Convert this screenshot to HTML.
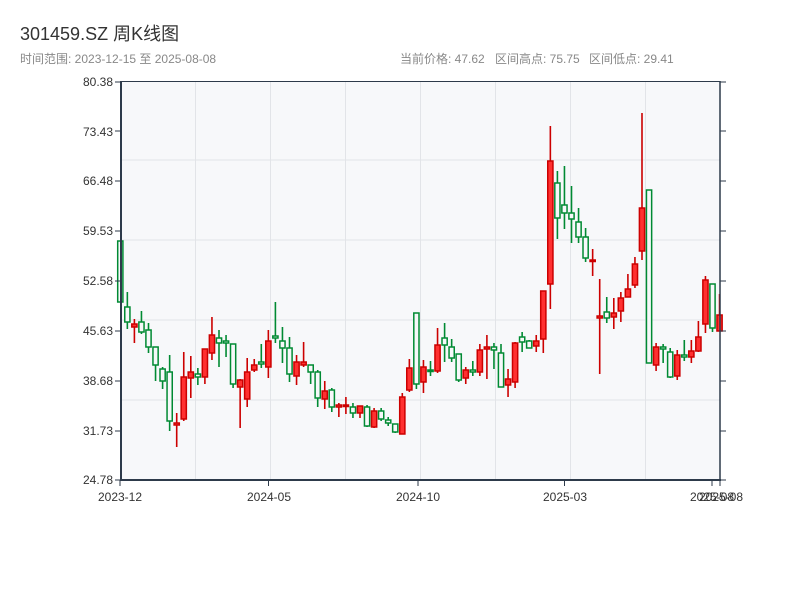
<!DOCTYPE html>
<html><head><meta charset="utf-8"><style>
body{margin:0;background:#fff;width:800px;height:600px;overflow:hidden;font-family:"Liberation Sans","Noto Sans CJK SC",sans-serif}
</style></head><body>
<svg id="s" width="800" height="600" xmlns="http://www.w3.org/2000/svg" font-family="Liberation Sans, Noto Sans CJK SC, sans-serif">
<text x="20" y="40" font-size="18" fill="#333">301459.SZ 周K线图</text>
<text x="20" y="63" font-size="12" fill="#888">时间范围: 2023-12-15 至 2025-08-08</text>
<text x="400" y="63" font-size="12" fill="#888">当前价格: 47.62</text>
<text x="495" y="63" font-size="12" fill="#888">区间高点: 75.75</text>
<text x="589" y="63" font-size="12" fill="#888">区间低点: 29.41</text>
<rect x="121" y="81" width="599" height="399" fill="#f7f8fa"/>
<g stroke="#e2e4e8" stroke-width="1">
<line x1="121" x2="720" y1="160" y2="160"/><line x1="121" x2="720" y1="240" y2="240"/>
<line x1="121" x2="720" y1="320" y2="320"/><line x1="121" x2="720" y1="400" y2="400"/>
<line x1="195.5" x2="195.5" y1="81" y2="480"/><line x1="270.5" x2="270.5" y1="81" y2="480"/>
<line x1="345.5" x2="345.5" y1="81" y2="480"/><line x1="420.5" x2="420.5" y1="81" y2="480"/>
<line x1="495.5" x2="495.5" y1="81" y2="480"/><line x1="570.5" x2="570.5" y1="81" y2="480"/>
<line x1="645.5" x2="645.5" y1="81" y2="480"/>
</g>
<g id="c"></g>
<g stroke="#2d3a4a">
<line x1="121" x2="720" y1="81.5" y2="81.5" stroke-width="1"/>
<line x1="121" x2="121" y1="81" y2="481" stroke-width="2"/>
<line x1="720" x2="720" y1="81" y2="481" stroke-width="1.5"/>
<line x1="120" x2="721" y1="480" y2="480" stroke-width="2"/>
</g>
<g id="t" stroke="#2d3a4a" stroke-width="1"></g>
<g font-size="12" fill="#333" text-anchor="end">
<text x="113" y="86">80.38</text><text x="113" y="136">73.43</text><text x="113" y="185">66.48</text>
<text x="113" y="235">59.53</text><text x="113" y="285">52.58</text><text x="113" y="335">45.63</text>
<text x="113" y="385">38.68</text><text x="113" y="435">31.73</text><text x="113" y="484">24.78</text>
</g>
<g font-size="12" fill="#333" text-anchor="middle">
<text x="120" y="501">2023-12</text><text x="269" y="501">2024-05</text><text x="418" y="501">2024-10</text>
<text x="565" y="501">2025-03</text><text x="712" y="501">2025-08</text><text x="721" y="501">2025-08</text>
</g>
</svg>
<script>
var d=[
['g',241,302,241,302],['g',307,322,292,329],['r',324,327,319,343],['g',322,332,311,334],['g',330,347,323,353],
['g',347,365,347,381],['g',369,381,367,389],['g',372,421,355,431],['r',423,425,413,447],['r',377,419,352,421],
['r',372,378,356,398],['g',374,377,368,385],['r',349,377,349,384],['r',335,353,317,360],['g',338,343,330,367],
['g',341,343,335,357],['g',344,384,344,388],['r',380,387,379,428],['r',372,399,358,407],['r',365,370,359,372],
['g',362,364,344,368],['r',341,367,330,378],['g',336,338,302,343],['g',341,348,327,363],['g',348,374,337,382],
['r',362,376,355,385],['r',362,365,342,367],['g',365,372,365,384],['g',372,398,370,407],['r',391,399,381,409],
['g',390,407,388,412],['r',405,407,403,417],['r',405,406,397,414],['g',407,413,403,418],['r',406,413,406,418],
['g',407,426,405,427],['r',411,427,408,428],['g',411,419,408,421],['g',420,423,417,426],['g',424,432,424,433],
['r',397,434,393,434],['r',368,390,359,392],['g',313,384,313,389],['r',367,382,360,393],['g',370,371,361,376],
['r',345,371,328,373],['g',338,345,323,362],['g',347,358,339,362],['g',354,380,354,382],['r',370,378,367,384],
['g',370,372,361,376],['r',350,372,344,376],['r',347,349,335,379],['g',347,350,343,369],['g',353,387,344,387],
['r',379,385,369,397],['r',343,382,342,388],['g',337,342,332,352],['g',341,348,340,348],['r',341,346,335,352],
['r',291,339,291,353],['r',161,284,126,309],['g',183,218,171,239],['g',205,213,166,229],['g',213,219,186,243],
['g',222,237,208,243],['g',237,258,228,262],['r',260,261,249,276],['r',316,318,279,374],['g',312,318,297,323],
['r',313,317,298,329],['r',298,311,292,322],['r',289,297,274,297],['r',264,285,257,288],['r',208,251,113,260],
['g',190,363,190,363],['r',347,365,343,371],['g',347,349,344,363],['g',352,377,348,378],['r',355,376,350,380],
['g',355,357,340,361],['r',351,357,340,363],['r',337,351,321,352],['r',280,324,276,333],['g',284,328,284,332],
['r',315,331,294,331]];
var h='';
d.forEach(function(c,i){
 var x=120.3+7.05*i, red=c[0]=='r', col=red?'#cc0000':'#008a33';
 var t=Math.min(c[1],c[2]), b=Math.max(c[1],c[2]); if(b-t<1.5)b=t+1.5;
 h+='<line x1="'+x+'" x2="'+x+'" y1="'+c[3]+'" y2="'+c[4]+'" stroke="'+col+'" stroke-width="1.6"/>';
 h+='<rect x="'+(x-2.6)+'" y="'+t+'" width="5.2" height="'+(b-t)+'" fill="'+(red?'#ff3030':'#f7f8fa')+'" stroke="'+col+'" stroke-width="1.5"/>';
});
document.getElementById('c').innerHTML=h;
var t='';[82,131,181,231,281,331,381,431,480].forEach(function(y){t+='<line x1="115" x2="121" y1="'+y+'" y2="'+y+'"/><line x1="720" x2="726" y1="'+y+'" y2="'+y+'"/>';});
[120,268.5,418,564.5,712,720].forEach(function(x){t+='<line x1="'+x+'" x2="'+x+'" y1="480" y2="486"/>';});
document.getElementById('t').innerHTML=t;
</script>
</body></html>
